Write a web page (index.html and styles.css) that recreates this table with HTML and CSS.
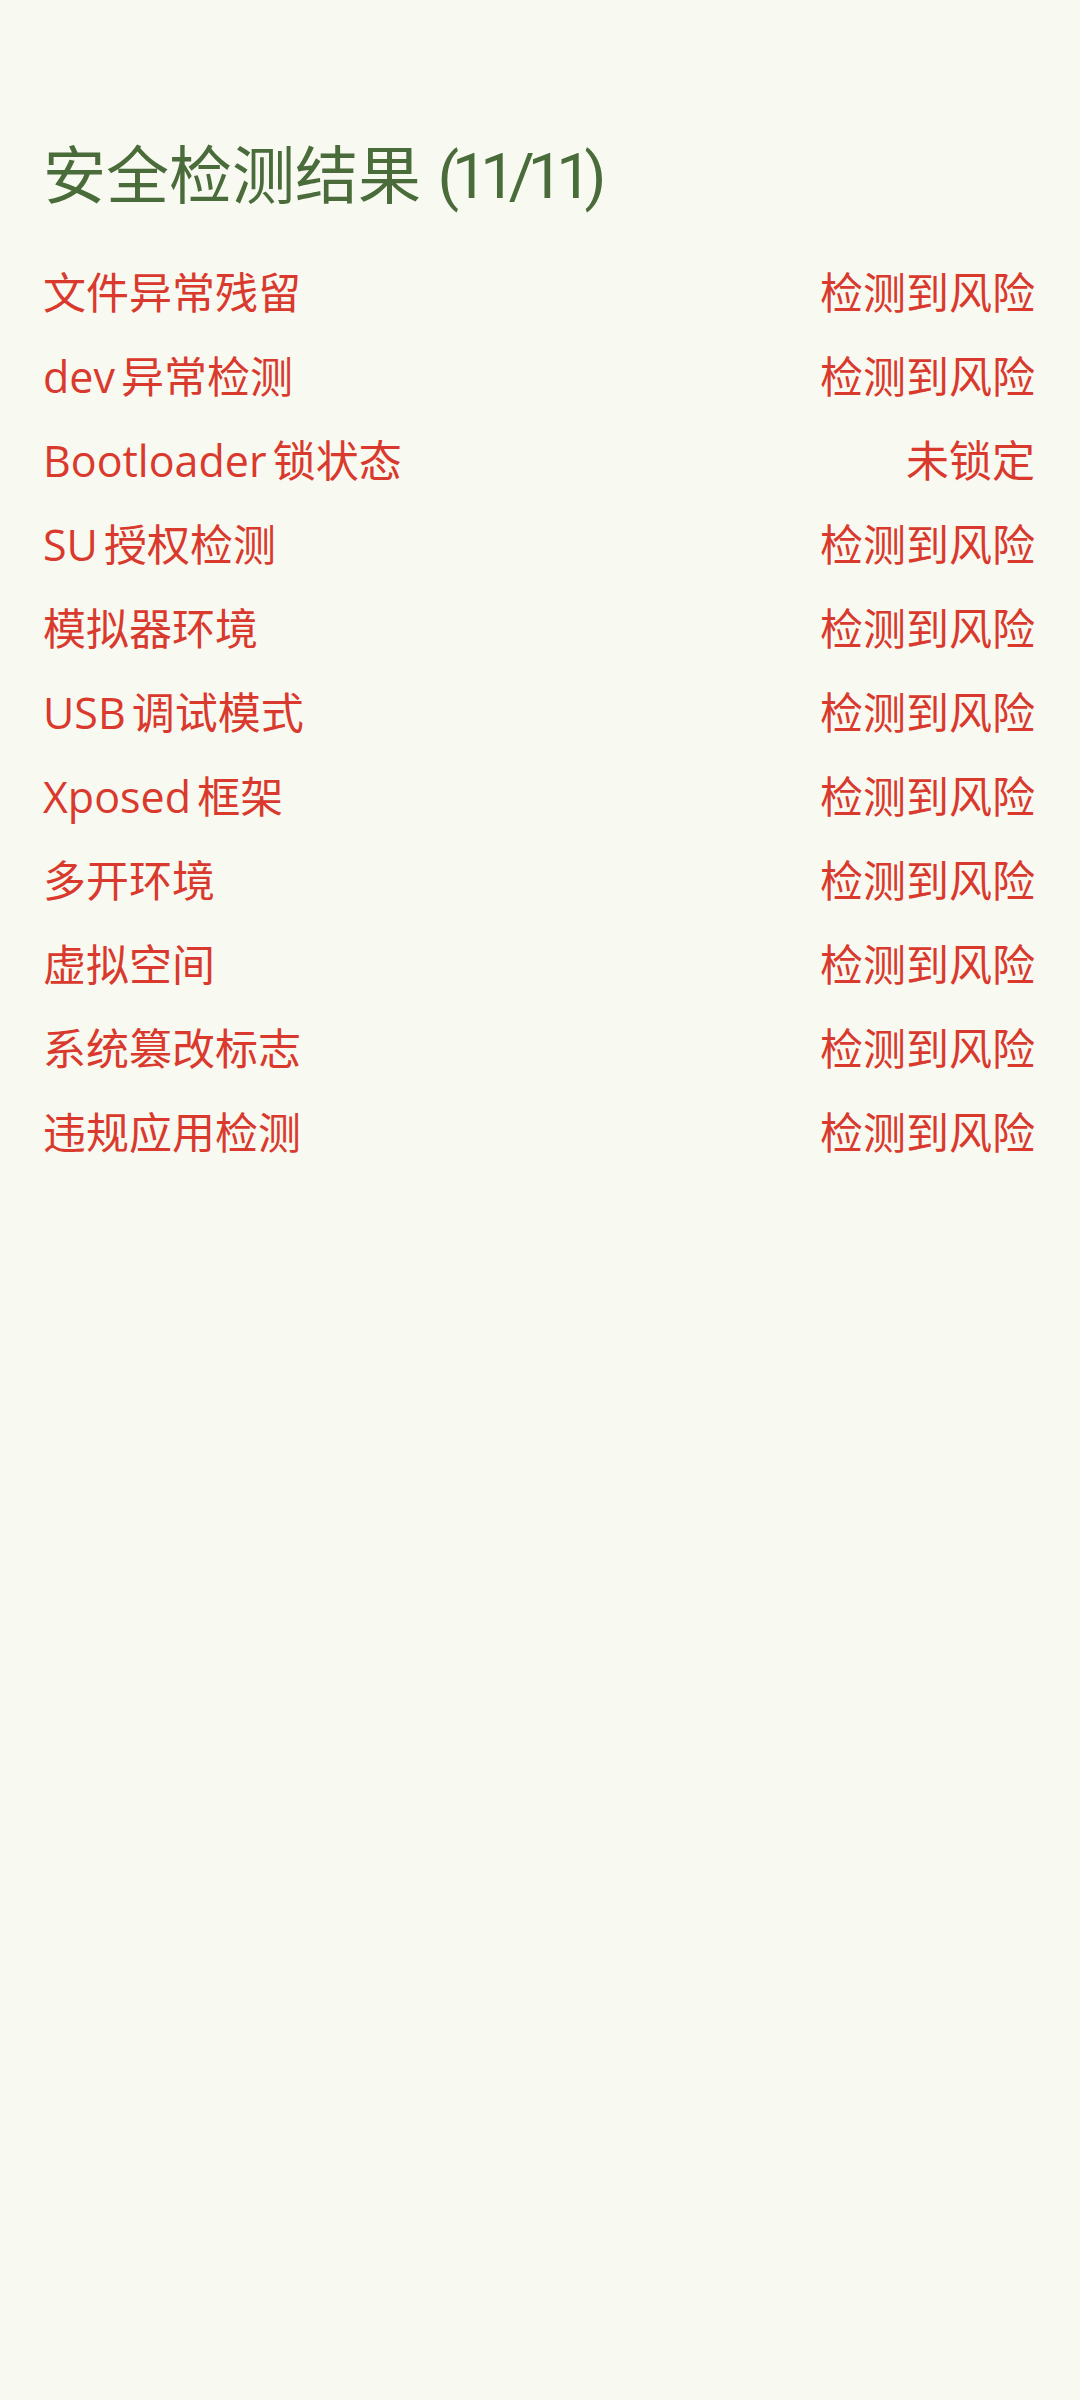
FILE: index.html
```html
<!DOCTYPE html>
<html lang="zh-CN">
<head>
<meta charset="utf-8">
<link rel="stylesheet" href="styles.css">
</head>
<body>
<main class="page">
  <h1 class="title">安全检测结果 <span class="count">(11/11)</span></h1>
  <ul class="list">
    <li class="row"><span class="name">文件异常残留</span><span class="status">检测到风险</span></li>
    <li class="row"><span class="name">dev 异常检测</span><span class="status">检测到风险</span></li>
    <li class="row"><span class="name">Bootloader 锁状态</span><span class="status">未锁定</span></li>
    <li class="row"><span class="name">SU 授权检测</span><span class="status">检测到风险</span></li>
    <li class="row"><span class="name">模拟器环境</span><span class="status">检测到风险</span></li>
    <li class="row"><span class="name">USB 调试模式</span><span class="status">检测到风险</span></li>
    <li class="row"><span class="name">Xposed 框架</span><span class="status">检测到风险</span></li>
    <li class="row"><span class="name">多开环境</span><span class="status">检测到风险</span></li>
    <li class="row"><span class="name">虚拟空间</span><span class="status">检测到风险</span></li>
    <li class="row"><span class="name">系统篡改标志</span><span class="status">检测到风险</span></li>
    <li class="row"><span class="name">违规应用检测</span><span class="status">检测到风险</span></li>
  </ul>
</main>
</body>
</html>
```
FILE: styles.css
```css
html, body {
  margin: 0;
  padding: 0;
  background: #f8f9f1;
}
body {
  width: 1080px;
  height: 2400px;
  font-family: "Open Sans", "Noto Sans CJK SC", sans-serif;
}
.page {
  padding: 132px 45px 0 43px;
  display: flex;
  flex-direction: column;
}
.title {
  margin: 0 0 32px 0;
  font-size: 63px;
  font-weight: 400;
  line-height: 84px;
  color: #4a6b3a;
}
.count {
  font-family: "Roboto", "Noto Sans CJK SC", sans-serif;
  letter-spacing: -7px;
}
.list {
  list-style: none;
  margin: 0;
  padding: 0;
  display: flex;
  flex-direction: column;
}
.row {
  display: flex;
  justify-content: space-between;
  align-items: center;
  height: 84px;
  font-size: 43px;
  line-height: 84px;
  word-spacing: -5px;
  color: #d93a2d;
}
```
